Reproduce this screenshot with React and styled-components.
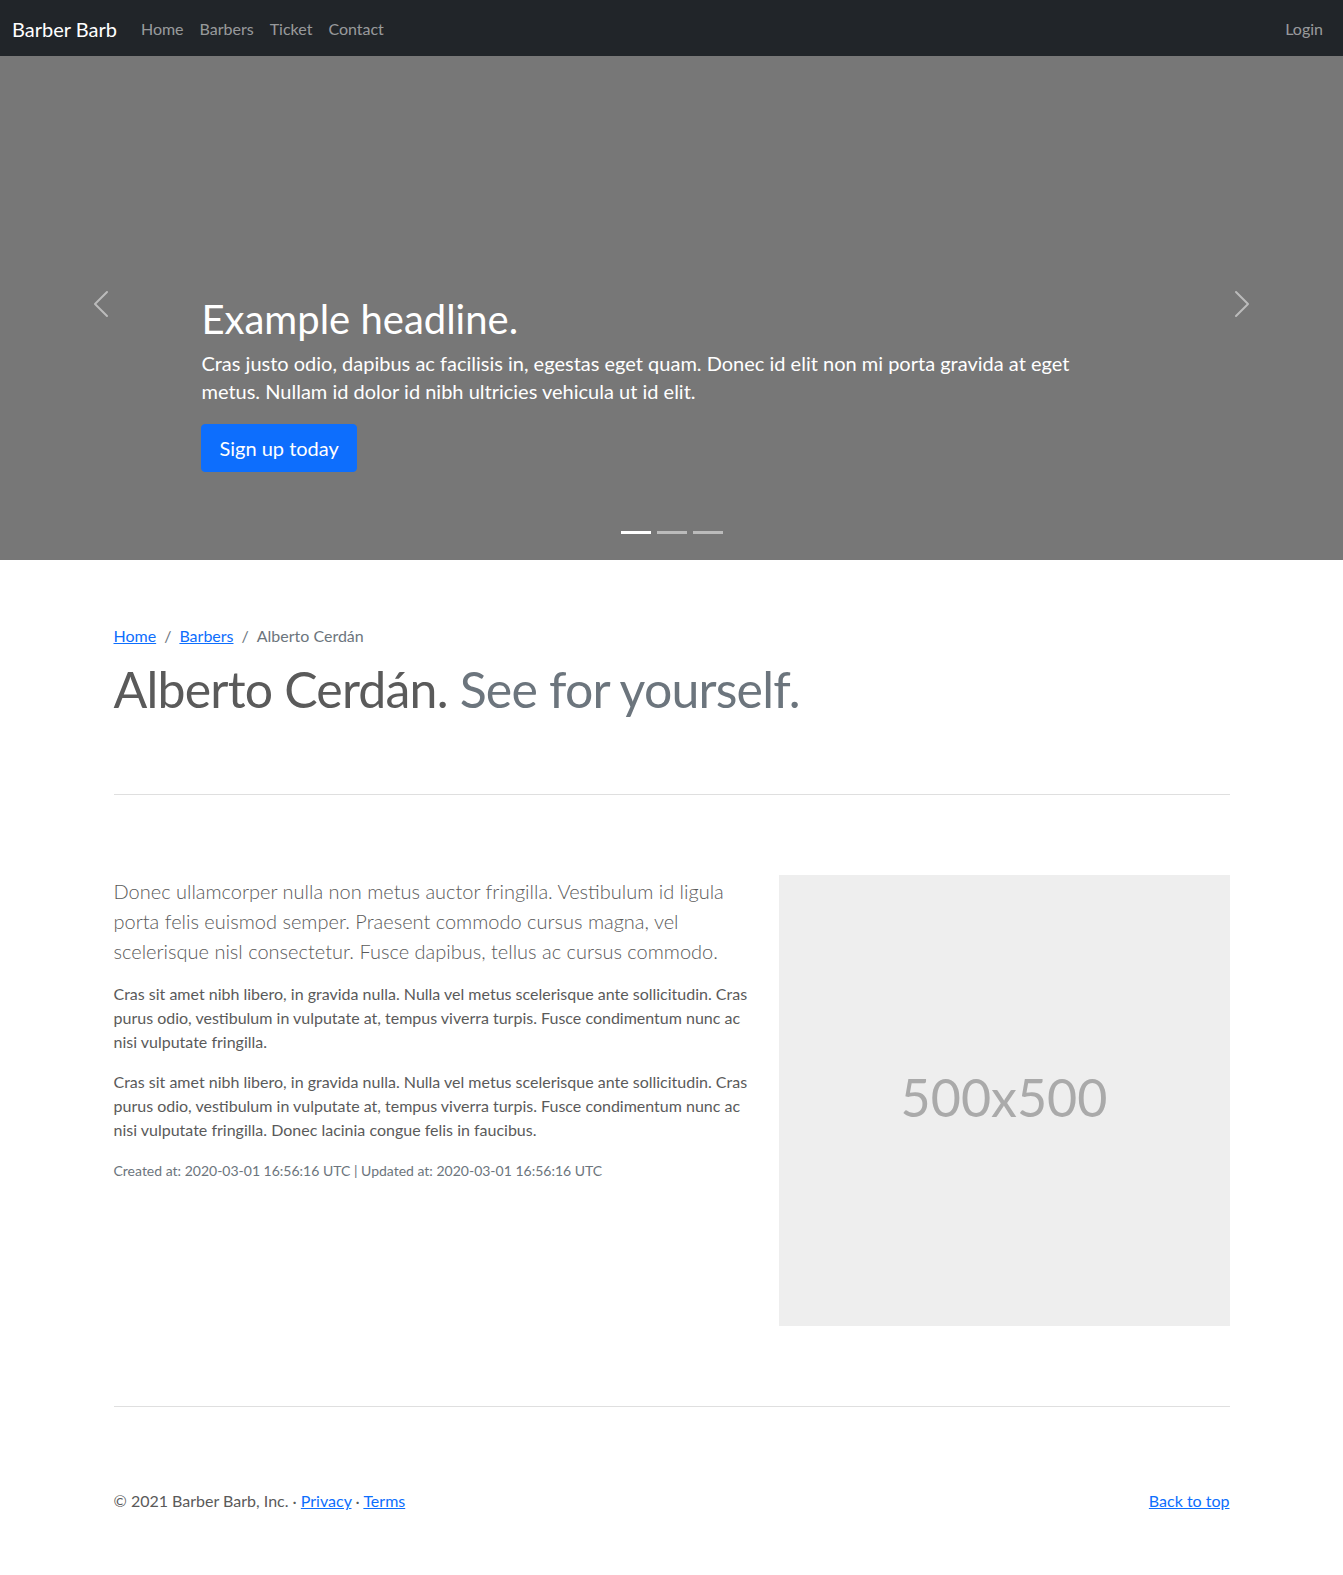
import React from "react";
import styled, { createGlobalStyle } from "styled-components";

const GlobalStyle = createGlobalStyle`
  *, *::before, *::after { box-sizing: border-box; }
  body {
    margin: 0;
    padding-top: 48px;
    padding-bottom: 48px;
    font-family: Lato, "Segoe UI", "Noto Sans", sans-serif;
    font-size: 16px;
    line-height: 1.5;
    color: #5a5a5a;
    background: #fff;
  }
  p { margin: 0 0 16px; }
  a { color: #0d6efd; }
`;

const Navbar = styled.nav`
  position: fixed;
  top: 0;
  left: 0;
  right: 0;
  z-index: 10;
  height: 56px;
  padding: 9px 12px 7px;
  background-color: #212529;
  display: flex;
  align-items: center;
`;

const Brand = styled.a`
  font-size: 20px;
  line-height: 30px;
  color: #fff;
  text-decoration: none;
  margin-right: 16px;
`;

const NavList = styled.div`
  display: flex;
  flex: 1;
`;

const NavLink = styled.a`
  padding: 8px;
  font-size: 16px;
  line-height: 24px;
  color: rgba(255, 255, 255, 0.55);
  text-decoration: none;
  margin-left: ${({ $push }) => ($push ? "auto" : "0")};
`;

const Carousel = styled.div`
  height: 512px;
  margin-bottom: 64px;
  background-color: #777;
  display: grid;
  grid-template-columns: 15% 1fr 15%;
  grid-template-rows: 1fr auto;
  grid-template-areas:
    "prev caption next"
    "prev dots next";
`;

const Control = styled.button`
  grid-area: ${({ $side }) => $side};
  border: 0;
  background: none;
  padding: 0;
  display: flex;
  align-items: center;
  justify-content: center;
  opacity: 0.5;
  svg { width: 32px; height: 32px; }
`;

const Caption = styled.div`
  grid-area: caption;
  align-self: end;
  padding: 20px 0 33px;
  color: #fff;
`;

const Headline = styled.h1`
  font-size: 40px;
  font-weight: 400;
  line-height: 1.2;
  margin: 0 0 6px;
`;

const CaptionText = styled.p`
  max-width: 910px;
  font-size: 20px;
  line-height: 1.4;
  margin-bottom: ${({ $gap }) => $gap || 16}px;
`;

const ButtonPrimary = styled.a`
  display: inline-block;
  padding: 8px 17px;
  font-size: 20px;
  line-height: 30px;
  color: #fff;
  background-color: #0d6efd;
  border: 1px solid #0d6efd;
  border-radius: 4px;
  text-decoration: none;
`;

const Indicators = styled.div`
  grid-area: dots;
  display: flex;
  justify-content: center;
  margin-bottom: 16px;
`;

const Indicator = styled.span`
  width: 30px;
  height: 23px;
  margin: 0 3px;
  border-top: 10px solid transparent;
  border-bottom: 10px solid transparent;
  background-color: #fff;
  background-clip: padding-box;
  opacity: ${({ $active }) => ($active ? 1 : 0.5)};
`;

const Container = styled.div`
  width: 1140px;
  margin: 0 auto;
  padding: 0 12px;
`;

const Breadcrumb = styled.ol`
  display: flex;
  list-style: none;
  margin: 0 0 16px;
  padding: 0;
  li + li::before {
    content: "/";
    color: #6c757d;
    padding: 0 8px;
  }
`;

const Crumb = styled.li`
  color: ${({ $active }) => ($active ? "#6c757d" : "inherit")};
`;

const Heading = styled.h2`
  font-size: 50px;
  font-weight: 400;
  line-height: 1;
  letter-spacing: -0.8px;
  margin: 0;
`;

const Muted = styled.span`
  color: #6c757d;
`;

const Divider = styled.hr`
  margin: 80px 0;
  border: 0;
  border-top: 1px solid #dfdfdf;
`;

const Row = styled.div`
  display: grid;
  grid-template-columns: 7fr 5fr;
  margin: 0 -12px;
  > * { padding: 0 12px; }
`;

const Lead = styled.p`
  font-size: 20px;
  font-weight: 300;
  line-height: 1.5;
  margin-top: 1px;
`;

const Meta = styled.small`
  font-size: 14px;
  color: #6c757d;
`;

const Placeholder = styled.div`
  aspect-ratio: 1 / 1;
  padding-bottom: 8px;
  background-color: #eee;
  color: #aaa;
  font-size: 52px;
  display: flex;
  align-items: center;
  justify-content: center;
`;

const Footer = styled.footer`
  display: flex;
  justify-content: space-between;
  padding-top: 2px;
`;

const Chevron = ({ dir }) => (
  <svg viewBox="0 0 16 16" fill="#fff">
    {dir === "prev" ? (
      <path d="M11.354 1.646a.5.5 0 0 1 0 .708L5.707 8l5.647 5.646a.5.5 0 0 1-.708.708l-6-6a.5.5 0 0 1 0-.708l6-6a.5.5 0 0 1 .708 0z" />
    ) : (
      <path d="M4.646 1.646a.5.5 0 0 1 .708 0l6 6a.5.5 0 0 1 0 .708l-6 6a.5.5 0 0 1-.708-.708L10.293 8 4.646 2.354a.5.5 0 0 1 0-.708z" />
    )}
  </svg>
);

const lorem =
  "Cras sit amet nibh libero, in gravida nulla. Nulla vel metus scelerisque ante sollicitudin. Cras purus odio, vestibulum in vulputate at, tempus viverra turpis. Fusce condimentum nunc ac nisi vulputate fringilla.";

export default function App() {
  return (
    <>
      <GlobalStyle />
      <Navbar>
        <Brand href="#">Barber Barb</Brand>
        <NavList>
          <NavLink href="#">Home</NavLink>
          <NavLink href="#">Barbers</NavLink>
          <NavLink href="#">Ticket</NavLink>
          <NavLink href="#">Contact</NavLink>
          <NavLink href="#" $push>
            Login
          </NavLink>
        </NavList>
      </Navbar>

      <Carousel>
        <Control $side="prev" aria-label="Previous">
          <Chevron dir="prev" />
        </Control>
        <Caption>
          <Headline>Example headline.</Headline>
          <CaptionText $gap={19}>
            Cras justo odio, dapibus ac facilisis in, egestas eget quam. Donec id elit non mi porta gravida at eget
            metus. Nullam id dolor id nibh ultricies vehicula ut id elit.
          </CaptionText>
          <CaptionText>
            <ButtonPrimary href="#">Sign up today</ButtonPrimary>
          </CaptionText>
        </Caption>
        <Indicators>
          <Indicator $active />
          <Indicator />
          <Indicator />
        </Indicators>
        <Control $side="next" aria-label="Next">
          <Chevron dir="next" />
        </Control>
      </Carousel>

      <Container>
        <Breadcrumb>
          <Crumb>
            <a href="#">Home</a>
          </Crumb>
          <Crumb>
            <a href="#">Barbers</a>
          </Crumb>
          <Crumb $active>Alberto Cerdán</Crumb>
        </Breadcrumb>
        <Heading>
          Alberto Cerdán. <Muted>See for yourself.</Muted>
        </Heading>

        <Divider />

        <Row>
          <div>
            <Lead>
              Donec ullamcorper nulla non metus auctor fringilla. Vestibulum id ligula porta felis euismod semper.
              Praesent commodo cursus magna, vel scelerisque nisl consectetur. Fusce dapibus, tellus ac cursus commodo.
            </Lead>
            <p>{lorem}</p>
            <p>{lorem} Donec lacinia congue felis in faucibus.</p>
            <p>
              <Meta>Created at: 2020-03-01 16:56:16 UTC | Updated at: 2020-03-01 16:56:16 UTC</Meta>
            </p>
          </div>
          <div>
            <Placeholder>500x500</Placeholder>
          </div>
        </Row>

        <Divider />
      </Container>

      <Container as="footer">
        <Footer as="div">
          <p>
            © 2021 Barber Barb, Inc. · <a href="#">Privacy</a> · <a href="#">Terms</a>
          </p>
          <p>
            <a href="#">Back to top</a>
          </p>
        </Footer>
      </Container>
    </>
  );
}
